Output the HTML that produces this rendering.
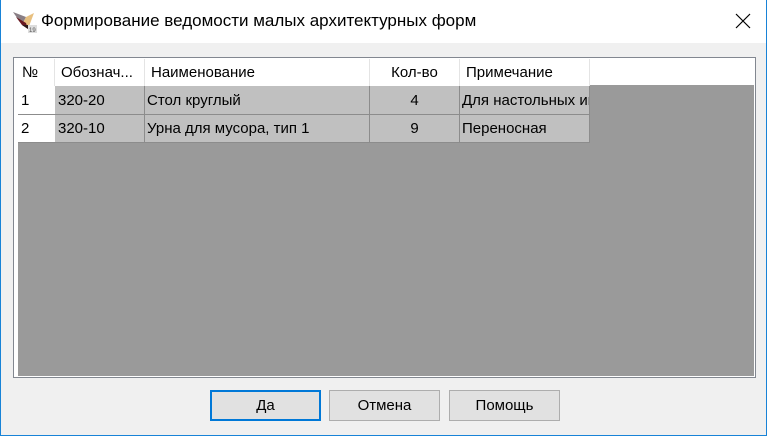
<!DOCTYPE html>
<html><head><meta charset="utf-8"><style>
*{margin:0;padding:0;box-sizing:border-box}
body{width:767px;height:436px;overflow:hidden;background:#f0f0f0;font-family:"Liberation Sans","Noto Sans CJK JP",sans-serif;position:relative}
.win{position:absolute;left:0;top:0;width:767px;height:436px;border:1px solid #1883d7;border-top:none;background:#f0f0f0}
.title{position:absolute;left:0;top:0;width:765px;height:43px;background:#fff}
.title .t{position:absolute;left:40px;top:11px;font-size:17px;color:#000}
.close{position:absolute;left:734px;top:13px}
.frame{position:absolute;left:12px;top:57px;width:743px;height:321px;border:1px solid #828790;background:#fff;padding:1px}
.gray{position:absolute;left:4px;top:27px;right:1px;bottom:1px;background:#9a9a9a}
.c{position:absolute;font-size:15px;color:#000;white-space:nowrap;overflow:hidden;height:28px;line-height:28px}
.h{background:#fff;border-right:1px solid #e4e4e4;height:27px;line-height:27px}
.g{background:#c0c0c0;border-right:1px solid #8c8c8c;border-bottom:1px solid #8c8c8c}
.w{background:#fff;border-bottom:1px solid #8c8c8c}
.btn{position:absolute;top:390px;width:111px;height:31px;background:#e1e1e1;border:1px solid #adadad;font-size:15px;text-align:center;line-height:29px}
</style></head><body>
<div class="win">
<div class="title">
<svg style="position:absolute;left:11px;top:11px" width="26" height="22" viewBox="0 0 26 22">
<polygon points="1,1 10,14 14,6" fill="#8a7f85"/>
<polygon points="14,6 10,14 16,18 22,2" fill="#e8c080"/>
<polygon points="4,6 10,14 16,18 14,12" fill="#6a1820"/>
<polygon points="10,14 16,18 16,14" fill="#2a1a1a"/>
<rect x="16" y="14" width="9" height="8" fill="#ddd"/>
<text x="17" y="21" font-size="6" fill="#555" font-family="Liberation Sans">19</text>
</svg>
<div class="t">Формирование ведомости малых архитектурных форм</div>
<svg class="close" width="16" height="16"><path d="M1 1L15 15M15 1L1 15" stroke="#000" stroke-width="1.2"/></svg>
</div>
<div class="frame">
<div class="gray"></div>
<div class="c h" style="left:4px;top:1px;width:37px;padding-left:4px">№</div>
<div class="c h" style="left:41px;top:1px;width:90px;padding-left:6px">Обознач...</div>
<div class="c h" style="left:131px;top:1px;width:225px;padding-left:6px">Наименование</div>
<div class="c h" style="left:356px;top:1px;width:90px;text-align:center">Кол-во</div>
<div class="c h" style="left:446px;top:1px;width:130px;padding-left:6px">Примечание</div>
<div class="c w" style="left:4px;top:28px;width:37px;padding-left:3px;height:29px;line-height:29px">1</div>
<div class="c g" style="left:41px;top:28px;width:90px;padding-left:3px;height:29px;line-height:29px">320-20</div>
<div class="c g" style="left:131px;top:28px;width:225px;padding-left:2px;height:29px;line-height:29px">Стол круглый</div>
<div class="c g" style="left:356px;top:28px;width:90px;text-align:center;height:29px;line-height:29px">4</div>
<div class="c g" style="left:446px;top:28px;width:130px;padding-left:2px;height:29px;line-height:29px">Для настольных игр</div>
<div class="c w" style="left:4px;top:57px;width:37px;padding-left:3px">2</div>
<div class="c g" style="left:41px;top:57px;width:90px;padding-left:3px">320-10</div>
<div class="c g" style="left:131px;top:57px;width:225px;padding-left:2px">Урна для мусора, тип 1</div>
<div class="c g" style="left:356px;top:57px;width:90px;text-align:center">9</div>
<div class="c g" style="left:446px;top:57px;width:130px;padding-left:2px">Переносная</div>
</div>
<div class="btn" style="left:209px;border:2px solid #0078d7;line-height:27px">Да</div>
<div class="btn" style="left:328px">Отмена</div>
<div class="btn" style="left:448px">Помощь</div>
</div>
</body></html>
